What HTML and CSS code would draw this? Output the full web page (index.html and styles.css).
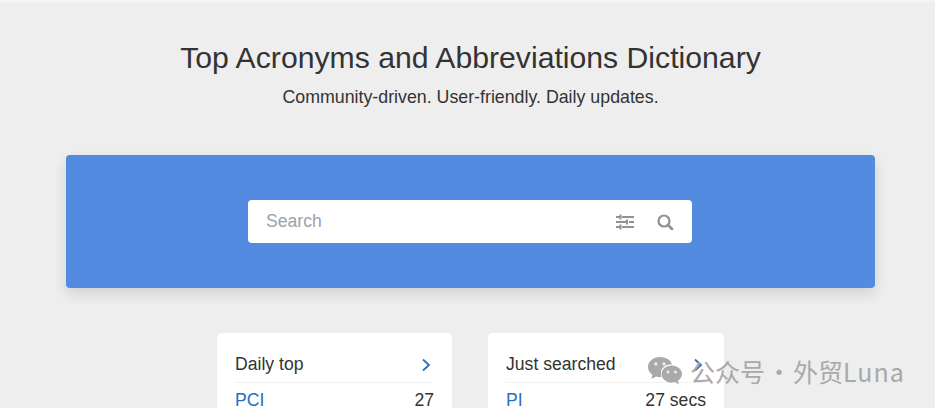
FILE: index.html
```html
<!DOCTYPE html>
<html lang="en">
<head>
<meta charset="utf-8">
<title>Top Acronyms and Abbreviations Dictionary</title>
<link rel="stylesheet" href="styles.css">
</head>
<body>
<div class="topline"></div>
<main class="page">
  <header class="intro">
    <h1 class="title">Top Acronyms and Abbreviations Dictionary</h1>
    <p class="subtitle">Community-driven. User-friendly. Daily updates.</p>
  </header>
  <section class="hero">
    <form class="search">
      <span class="search-placeholder">Search</span>
      <svg class="icon-sliders" viewBox="0 0 18 16" width="18" height="16" aria-hidden="true">
        <path d="M0 3h4M6 3h12M0 8h10M13 8h5M0 13h4M6 13h12" fill="none" stroke="#929292" stroke-width="2"/>
        <path d="M4.500 0.500v5M11 5.500v5M4.500 10.500v5" fill="none" stroke="#929292" stroke-width="2"/>
      </svg>
      <svg class="icon-search" viewBox="0 0 17 17" width="17" height="17" aria-hidden="true">
        <circle cx="7" cy="8" r="5.500" fill="none" stroke="#929292" stroke-width="2.200"/>
        <path d="M11 12l4 4" fill="none" stroke="#929292" stroke-width="2.600" stroke-linecap="round"/>
      </svg>
    </form>
  </section>
  <section class="cards">
    <article class="card">
      <div class="card-head">
        <span>Daily top</span>
        <svg class="chev" viewBox="0 0 10 14" width="10" height="14" aria-hidden="true"><path d="M2 1.500L8 7l-6 5.500" fill="none" stroke="#2b6cc4" stroke-width="1.800"/></svg>
      </div>
      <div class="row"><a class="link">PCI</a><span>27</span></div>
    </article>
    <article class="card card-wide">
      <div class="card-head">
        <span>Just searched</span>
        <svg class="chev" viewBox="0 0 10 14" width="10" height="14" aria-hidden="true"><path d="M2 1.500L8 7l-6 5.500" fill="none" stroke="#2b6cc4" stroke-width="1.800"/></svg>
      </div>
      <div class="row"><a class="link">PI</a><span>27 secs</span></div>
    </article>
  </section>
</main>
<div class="watermark">
  <svg class="wechat" viewBox="0 0 36 30" width="36" height="30" aria-hidden="true">
    <path fill-rule="evenodd" d="M13 1C6 1 1 5.500 1 11c0 3.200 1.700 6 4.500 7.800L4.300 23l4.800-2.600c1.300.4 2.600.6 3.900.6 .6 0 1 0 1.500-.1-.4-1.100-.5-2.200-.5-3.300C13.500 12 19 8 25 8.300 23.800 4 19 1 13 1z" fill="#a9a9a9"/>
    <path d="M35 18c0-5-4.900-8.600-10.300-8.600C19 9.400 14.600 13.300 14.600 18s4.400 8.600 10.100 8.600c1.200 0 2.300-.2 3.300-.5l3.900 2.300-1-3.600c2.400-1.700 4.100-4.100 4.100-6.800z" fill="#a9a9a9"/>
    <circle cx="8.800" cy="8" r="1.700" fill="#ececec"/><circle cx="17" cy="8" r="1.700" fill="#ececec"/>
    <circle cx="21" cy="16" r="1.500" fill="#ececec"/><circle cx="28.500" cy="16" r="1.500" fill="#ececec"/>
  </svg>
  <span class="watermark-text">公众号<span class="watermark-dot">·</span>外贸<span class="watermark-latin">Luna</span></span>
</div>
</body>
</html>
```
FILE: styles.css
```css
html, body {
  margin: 0;
  height: 408px;
  overflow: hidden;
}
body {
  background: #eeeeee;
  color: #333333;
  font-family: "Liberation Sans", Arial, sans-serif;
  position: relative;
}
.topline {
  height: 2px;
  background: #f4f4f4;
}
.page {
  display: flex;
  flex-direction: column;
  align-items: center;
  padding: 0 60px 0 66px;
  height: 406px;
  box-sizing: border-box;
  overflow: hidden;
}
.intro {
  text-align: center;
  padding-top: 38px;
}
.title {
  margin: 0;
  font-size: 30.200px;
  line-height: 36px;
  font-weight: 400;
}
.subtitle {
  margin: 9px 0 0;
  font-size: 17.800px;
  line-height: 24px;
  color: #333333;
}
.hero {
  margin-top: 46px;
  width: 100%;
  flex: none;
  box-sizing: border-box;
  height: 133px;
  background: #528be0;
  border-radius: 4px;
  box-shadow: 0 6px 14px rgba(0, 0, 0, 0.12);
  display: flex;
  justify-content: center;
  align-items: center;
  padding-right: 1px;
}
.search {
  width: 444px;
  height: 43px;
  box-sizing: border-box;
  background: #ffffff;
  border-radius: 4px;
  display: flex;
  align-items: center;
  padding: 0 18px 0 18px;
}
.search-placeholder {
  flex: 1;
  font-size: 17.600px;
  color: #9aa2ab;
}
.icon-search {
  margin-left: 23px;
}
.cards {
  display: flex;
  gap: 36px;
  margin-top: 45px;
  flex: none;
}
.card {
  width: 235px;
  height: 120px;
  box-sizing: border-box;
  background: #ffffff;
  border-radius: 5px;
  padding: 18px 18px 0;
}
.card-wide {
  width: 236px;
}
.card-head {
  display: flex;
  justify-content: space-between;
  align-items: center;
  height: 27px;
  padding-bottom: 4px;
  border-bottom: 1px solid #f2f2f2;
  font-size: 17.600px;
}
.chev {
  margin-right: 3px;
}
.row {
  display: flex;
  justify-content: space-between;
  font-size: 17.600px;
  line-height: 34px;
}
.link {
  color: #2b6cc4;
}
.watermark {
  position: absolute;
  left: 647px;
  top: 356px;
  display: flex;
  align-items: center;
}
.watermark-text {
  margin-left: 7px;
  font-family: "Noto Sans CJK SC", "Noto Sans", sans-serif;
  font-size: 25px;
  line-height: 30px;
  color: #a9a9a9;
}
.watermark-dot {
  display: inline-block;
  width: 28px;
  text-align: center;
}
.watermark-latin {
  letter-spacing: 1px;
}
```
